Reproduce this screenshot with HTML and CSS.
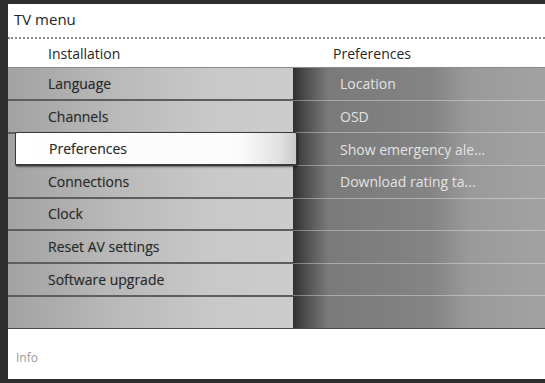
FILE: index.html
```html
<!doctype html>
<html>
    <head>
        <title>TV menu</title>
        <link rel="stylesheet" href="styles.css">
    </head>
    <body>
        <div class="tv">
            <div class="title">TV menu</div>
            <div class="crumbs">
                <span class="crumb">Installation</span>
                <span class="crumb">Preferences</span>
            </div>
            <div class="panels">
                <ul class="menu">
                    <li>Language</li>
                    <li>Channels</li>
                    <li class="selected">Preferences</li>
                    <li>Connections</li>
                    <li>Clock</li>
                    <li>Reset AV settings</li>
                    <li>Software upgrade</li>
                    <li></li>
                </ul>
                <ul class="sub">
                    <li>Location</li>
                    <li>OSD</li>
                    <li>Show emergency ale...</li>
                    <li>Download rating ta...</li>
                    <li></li>
                    <li></li>
                    <li></li>
                    <li></li>
                </ul>
            </div>
            <div class="info">Info</div>
        </div>
    </body>
</html>
```

FILE: styles.css
```css
* { margin: 0; padding: 0; box-sizing: border-box; }

body {
    background: #fff;
    font-family: 'Open Sans', 'DejaVu Sans', sans-serif;
    color: #262626;
}

.tv {
    width: 545px;
    height: 383px;
    display: flex;
    flex-direction: column;
    border-left: 8px solid #2e2e2e;
    border-top: 4px solid #2e2e2e;
    border-bottom: 4px solid #2e2e2e;
    background: #fff;
}

.title {
    height: 35px;
    padding: 5px 0 0 6px;
    font-size: 15px;
    border-bottom: 2px dotted #8a8a8a;
}

.crumbs {
    height: 28px;
    display: grid;
    grid-template-columns: 285px auto;
    align-items: center;
    font-size: 14px;
}

.crumb {
    padding-left: 40px;
}

.panels {
    height: 261px;
    display: grid;
    grid-template-columns: 285px auto;
    border-top: 1px solid #8a8a8a;
}

.menu, .sub {
    list-style: none;
    display: flex;
    flex-direction: column;
}

.menu {
    background: linear-gradient(to right, #a2a2a2 0%, #b8b8b8 35%, #c8c8c8 70%, #cccccc 100%);
}

.menu li {
    flex: 1;
    display: flex;
    align-items: center;
    padding-left: 40px;
    font-size: 14px;
    color: #2a2a2a;
    border-bottom: 2px solid #5e5e5e;
    text-shadow: 0 0 1px rgba(0,0,0,.25);
}

.menu li:last-child {
    border-bottom: none;
}

.menu li.selected {
    position: relative;
    z-index: 1;
    margin: -2px -4px 0 7px;
    padding-left: 33px;
    background: linear-gradient(to right, #fff 0%, #fbfbfb 80%, #e2e2e2 94%, #c8c8c8 100%);
    border: 1px solid #3a3a3a;
    border-bottom: 2px solid #3a3a3a;
    border-radius: 2px;
    box-shadow: 1px 1px 2px rgba(0,0,0,.5);
}

.sub {
    background: linear-gradient(to right, #303030 0%, #4e4e4e 5%, #7a7a7a 14%, #848484 55%, #9a9a9a 70%, #a2a2a2 100%);
}

.sub li {
    flex: 1;
    display: flex;
    align-items: center;
    padding-left: 47px;
    font-size: 14px;
    color: #e2e2e2;
    border-bottom: 1px solid rgba(255,255,255,.35);
}

.sub li:last-child {
    border-bottom: none;
}

.info {
    flex: 1;
    display: flex;
    align-items: center;
    padding: 6px 0 0 8px;
    font-size: 12px;
    color: #9a9a9a;
    border-top: 1px solid #4a4a4a;
}
```
